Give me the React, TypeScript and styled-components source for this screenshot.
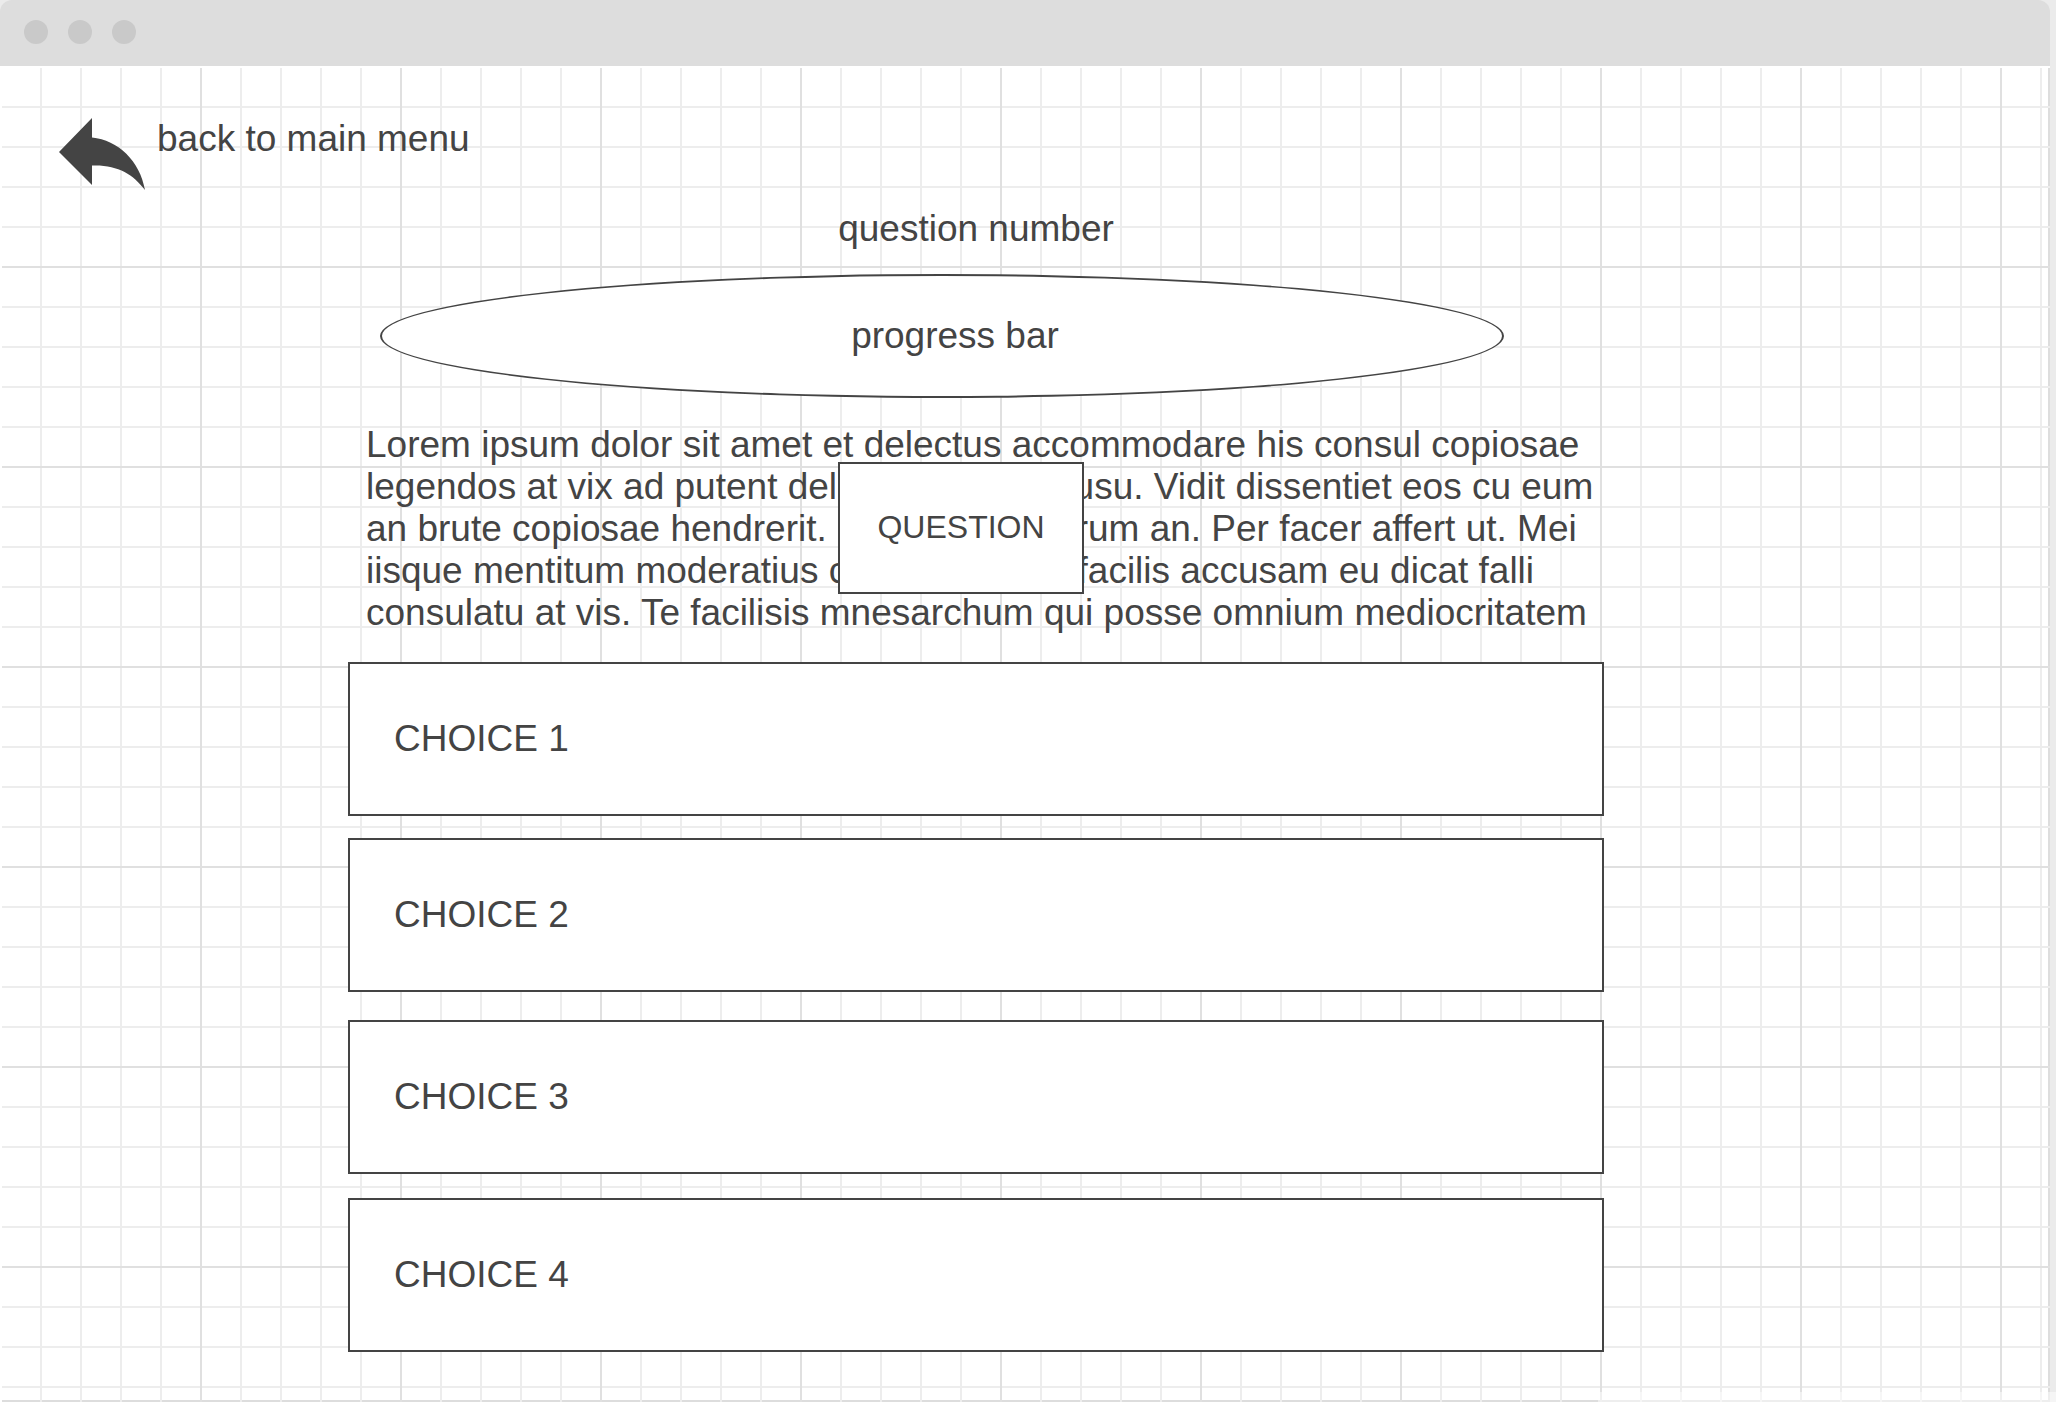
import React from "react";
import styled, { createGlobalStyle } from "styled-components";

const ink = "#444444";
const minor = "#ededed";
const major = "#e0e0e0";
const chrome = "#dddddd";

const GlobalStyle = createGlobalStyle`
  *, *::before, *::after { box-sizing: border-box; }
  body {
    margin: 0;
    background: #ebebeb;
    color: ${ink};
    font-family: "Liberation Sans", Arial, sans-serif;
    font-size: 37px;
    line-height: 42px;
  }
`;

const BrowserWindow = styled.div`
  display: flex;
  flex-direction: column;
  min-height: 100vh;
  margin-right: 6px;
`;

const TitleBar = styled.header`
  display: flex;
  align-items: flex-start;
  gap: 20px;
  height: 66px;
  padding: 20px 24px;
  border-radius: 12px 12px 0 0;
  background: ${chrome};
`;

const Dot = styled.span`
  width: 24px;
  height: 24px;
  border-radius: 50%;
  background: #c9c9c9;
`;

const Canvas = styled.main`
  flex: 1;
  padding: 50px 446px 48px 346px;
  border: solid #ffffff;
  border-width: 2px 0 0 2px;
  background-color: #ffffff;
  background-image:
    linear-gradient(to right, transparent 198px, ${major} 198px),
    linear-gradient(to bottom, transparent 198px, ${major} 198px),
    linear-gradient(to right, transparent 38px, ${minor} 38px),
    linear-gradient(to bottom, transparent 38px, ${minor} 38px),
    linear-gradient(${chrome}, ${chrome}),
    linear-gradient(${chrome}, ${chrome});
  background-size: 200px 200px, 200px 200px, 40px 40px, 40px 40px, 2px 100%, 100% 2px;
  background-position: 0 0, 0 0, 0 0, 0 0, right top, left bottom;
  background-repeat: repeat, repeat, repeat, repeat, no-repeat, no-repeat;
`;

const BackLink = styled.a`
  display: flex;
  align-items: flex-start;
  gap: 12px;
  width: max-content;
  height: 72px;
  margin-left: -289px;
  color: inherit;
  text-decoration: none;
`;

const BackArrow = styled.svg`
  width: 86px;
  height: 72px;
  fill: ${ink};
`;

const QuestionNumber = styled.h1`
  margin: 18px 0 24px;
  font-size: inherit;
  font-weight: 400;
  text-align: center;
`;

const Progress = styled.div`
  display: flex;
  align-items: center;
  justify-content: center;
  height: 124px;
  margin: 0 100px 26px 32px;
  padding-left: 26px;
  border: 2px solid ${ink};
  border-radius: 50%;
  background: #ffffff;
`;

const Prompt = styled.section`
  position: relative;
  margin: 0 4px 28px 18px;
`;

const PromptText = styled.p`
  margin: 0;
`;

const QuestionBadge = styled.div`
  position: absolute;
  top: 38px;
  left: calc(50% - 145px);
  display: flex;
  align-items: center;
  justify-content: center;
  width: 246px;
  height: 132px;
  padding-bottom: 2px;
  border: 2px solid ${ink};
  background: #ffffff;
  font-size: 32px;
`;

const Choices = styled.div`
  display: flex;
  flex-direction: column;
`;

const Choice = styled.button<{ $space: number }>`
  height: 154px;
  margin: ${({ $space }) => $space}px 0 0;
  padding: 0 44px;
  border: 2px solid ${ink};
  border-radius: 0;
  background: #ffffff;
  color: inherit;
  font: inherit;
  text-align: left;
  cursor: pointer;
`;

const CornerVeil = styled.div`
  position: fixed;
  right: 0;
  bottom: 0;
  width: 458px;
  height: 10px;
  background: rgba(255, 255, 255, 0.5);
  pointer-events: none;
`;

const choices = [
  { label: "CHOICE 1", space: 0 },
  { label: "CHOICE 2", space: 22 },
  { label: "CHOICE 3", space: 28 },
  { label: "CHOICE 4", space: 24 },
];

export default function App() {
  return (
    <>
      <GlobalStyle />
      <BrowserWindow>
        <TitleBar>
          <Dot />
          <Dot />
          <Dot />
        </TitleBar>
        <Canvas>
          <BackLink href="#menu">
            <BackArrow viewBox="0 0 86 72" aria-hidden="true">
              <path d="M0 34 L33 0 V19.5 C59 22 81 43 86 72 C74 56 58 46.500 33 47.500 V67 Z" />
            </BackArrow>
            back to main menu
          </BackLink>
          <QuestionNumber>question number</QuestionNumber>
          <Progress>progress bar</Progress>
          <Prompt>
            <PromptText>
              Lorem ipsum dolor sit amet et delectus accommodare his consul copiosae legendos at vix ad
              putent delectus delicata usu. Vidit dissentiet eos cu eum an brute copiosae hendrerit. Eos
              erant dolorum an. Per facer affert ut. Mei iisque mentitum moderatius cu. Sit munere facilis
              accusam eu dicat falli consulatu at vis. Te facilisis mnesarchum qui posse omnium
              mediocritatem
            </PromptText>
            <QuestionBadge>QUESTION</QuestionBadge>
          </Prompt>
          <Choices>
            {choices.map(({ label, space }) => (
              <Choice key={label} type="button" $space={space}>
                {label}
              </Choice>
            ))}
          </Choices>
        </Canvas>
      </BrowserWindow>
      <CornerVeil />
    </>
  );
}
